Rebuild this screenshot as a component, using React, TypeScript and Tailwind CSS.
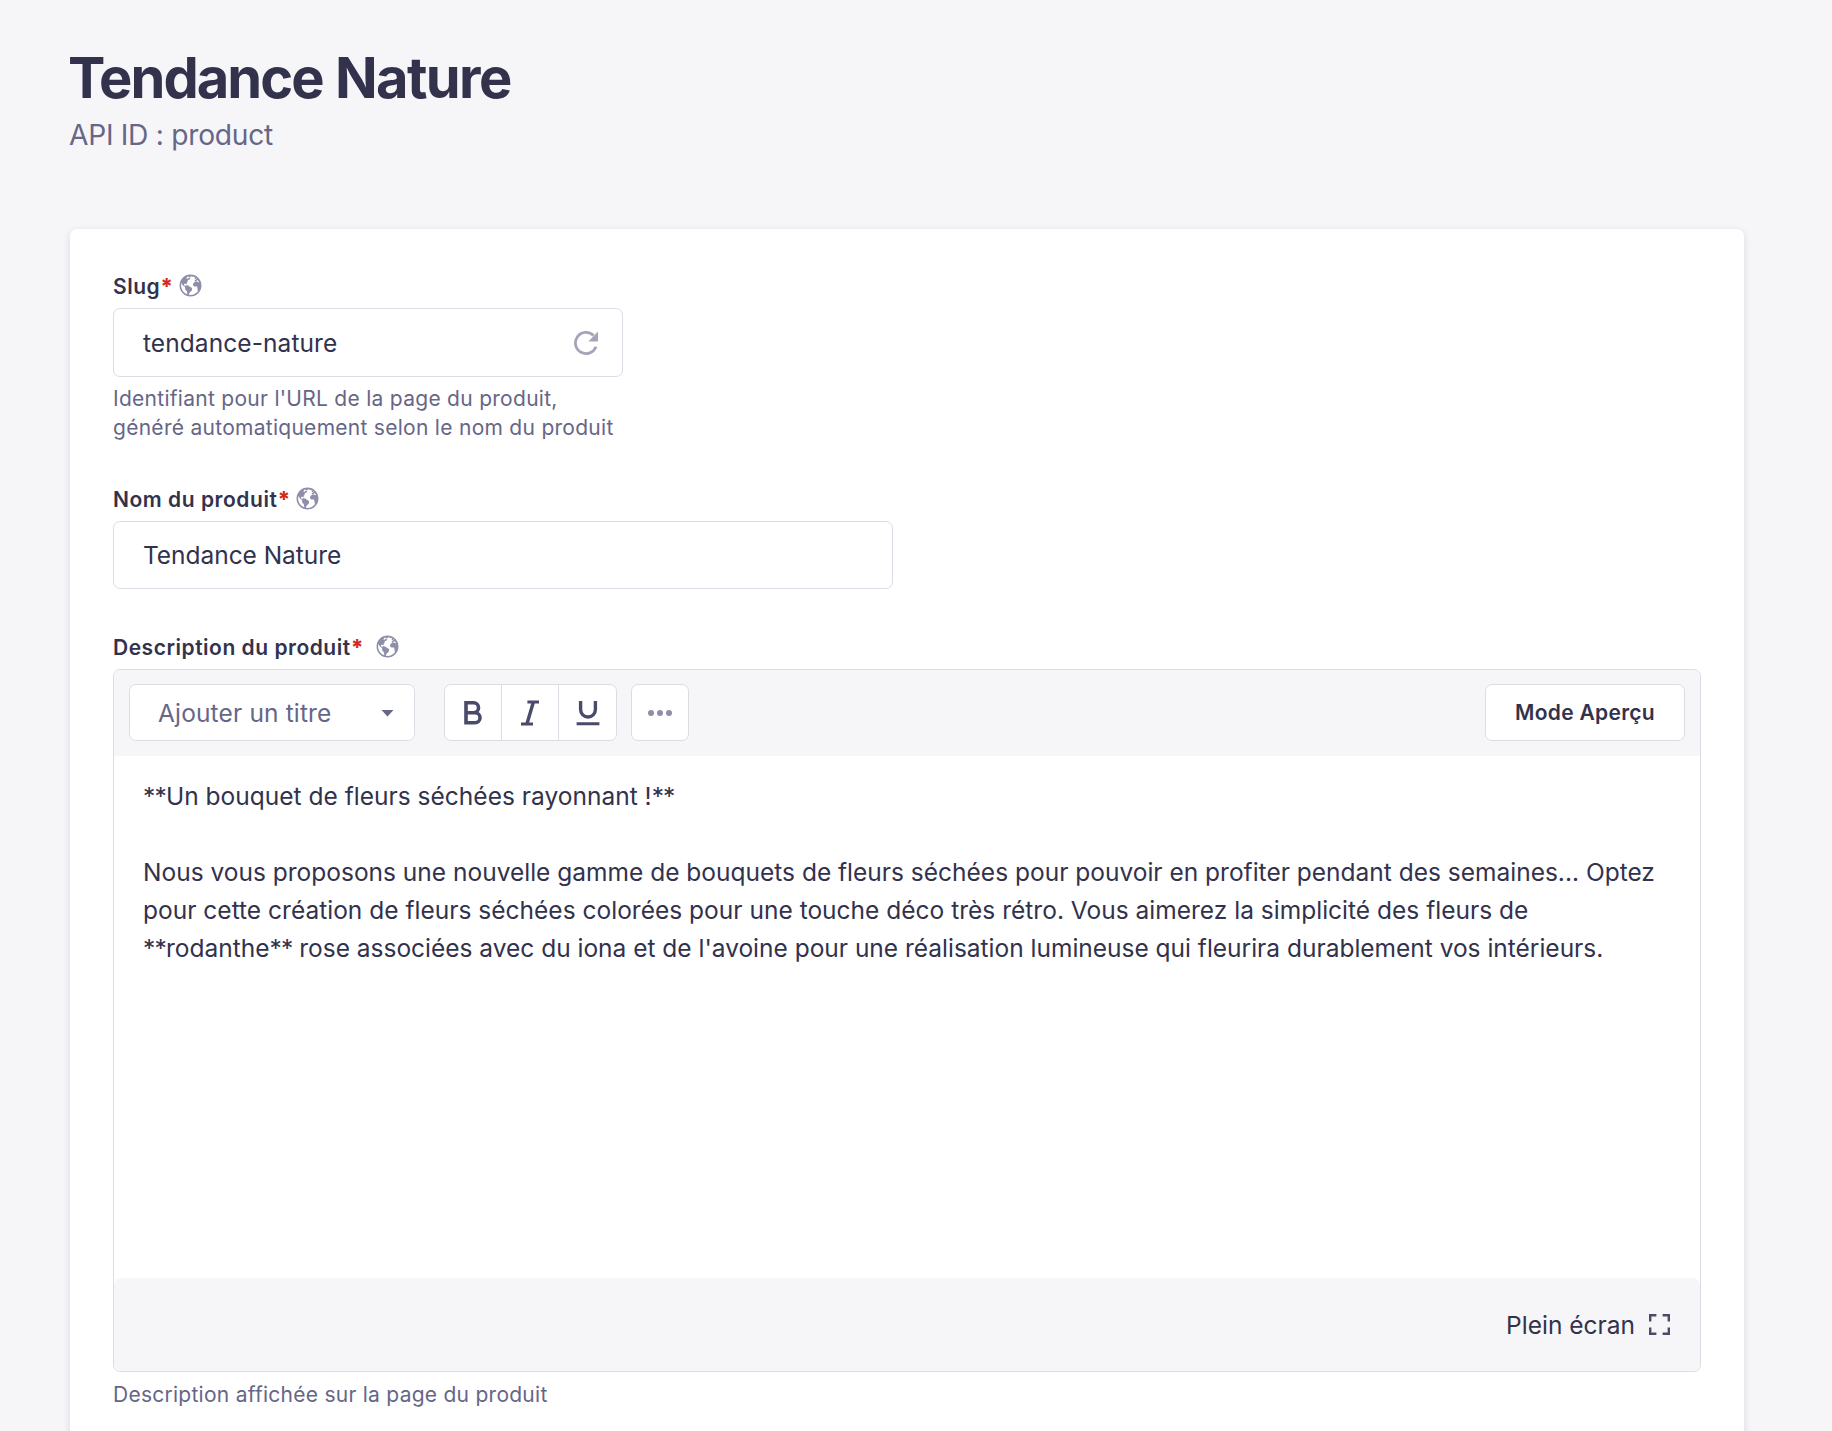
import React from "react";
import { IoEarth } from "react-icons/io5";

function Label({ text, tracking, gap }: { text: string; tracking: string; gap: string }) {
  return (
    <div className={`flex h-7 items-center ${gap}`}>
      <span className={`relative top-px text-[21px] leading-7 font-[640] whitespace-nowrap ${tracking}`}>
        {text}
        <span className="text-[22px] leading-none font-extrabold tracking-normal text-[#d02b20]">*</span>
      </span>
      <IoEarth className="-mx-[1.5px] -mt-px size-[25px] shrink-0 text-[#8e8ea9]" />
    </div>
  );
}

function Refresh() {
  return (
    <svg viewBox="0 0 26 26" className="size-[26px]" fill="none">
      <path d="M23 16.6A10.6 10.6 0 1 1 20.6 5.6" stroke="#a5a5ba" strokeWidth="2.8" />
      <path d="M25 1.6v10h-9.6z" fill="#a5a5ba" />
    </svg>
  );
}

function Stars() {
  return <span className="tracking-[-0.8px]">**</span>;
}

const toolButton = "flex w-[57px] items-center justify-center";

export default function App() {
  return (
    <div className="flex h-[1431px] w-[1832px] flex-col overflow-hidden bg-[#f6f6f9] px-[70px] pt-[43px] font-['Inter',sans-serif] text-[#32324d]">
      <h1 className="-ml-[2px] text-[56px] leading-[70px] font-bold tracking-[-1.95px] [word-spacing:1px] whitespace-nowrap">
        Tendance <span className="tracking-[-1.6px]">Nature</span>
      </h1>
      <p className="-ml-px pt-px text-[28.2px] leading-[42px] tracking-[-0.28px] text-[#666687]">API ID : product</p>

      <main className="mt-[73px] flex h-[1300px] w-[1674px] shrink-0 flex-col rounded-[7px] bg-white px-[43px] pt-[43px] shadow-[0_2px_7px_rgba(33,33,52,0.13)]">
        <Label text="Slug" tracking="tracking-[0.5px]" gap="gap-[6.5px]" />
        <div className="mt-2 flex h-[69px] w-[510px] items-center justify-between rounded-[7px] border border-[#dcdce4] pr-[23px] pl-[29px]">
          <span className="pt-[2px] text-[24.5px] tracking-[0.08px]">tendance-nature</span>
          <Refresh />
        </div>
        <p className="mt-[7px] text-[21px] leading-[29px] tracking-[0.28px] text-[#666687]">
          Identifiant pour l'URL de la page du produit,
          <br />
          généré automatiquement selon le nom du produit
        </p>

        <div className="mt-[43px]">
          <Label text="Nom du produit" tracking="tracking-[0.54px]" gap="gap-[6.5px]" />
        </div>
        <div className="mt-2 flex h-[68px] w-[780px] items-center rounded-[7px] border border-[#dcdce4] pl-[29px]">
          <span className="text-[24.5px] tracking-[-0.04px]">Tendance Nature</span>
        </div>

        <div className="mt-[44px]">
          <Label text="Description du produit" tracking="tracking-[0.52px]" gap="gap-[13px]" />
        </div>
        <section className="mt-2 flex h-[703px] w-[1588px] shrink-0 flex-col overflow-hidden rounded-[7px] border border-[#dcdce4]">
          <div className="flex h-[86px] shrink-0 items-start bg-[#f6f6f9] px-[15px] pt-[14px]">
            <div className="flex h-[57px] w-[286px] items-center justify-between rounded-[7px] border border-[#dcdce4] bg-white pr-[20px] pl-[28px]">
              <span className="pt-px text-[24.5px] tracking-[0.15px] text-[#666687]">Ajouter un titre</span>
              <svg viewBox="0 0 13 7" className="mt-[2px] h-[7px] w-[13px]">
                <path d="M.5 0h12L6.5 6.6z" fill="#666687" />
              </svg>
            </div>
            <div className="ml-[29px] flex h-[57px] w-[173px] divide-x divide-[#dcdce4] rounded-[7px] border border-[#dcdce4] bg-white">
              <div className={toolButton}>
                <svg viewBox="0 0 20 26" className="h-[26px] w-[20px]" fill="none" stroke="#4a4a6a" strokeWidth="3.6">
                  <path d="M3 2.8h7.6a4.9 4.9 0 0 1 0 9.9H3zM3 12.7h9a5 5 0 0 1 0 10.1H3z" strokeLinejoin="miter" />
                </svg>
              </div>
              <div className={toolButton}>
                <svg viewBox="0 0 20 26" className="h-[26px] w-[20px]" fill="none" stroke="#4a4a6a">
                  <path d="M7.4 1.9H19M1 24.1h12" strokeWidth="3" />
                  <path d="M13.4 1.9L6.9 24.1" strokeWidth="3.4" />
                </svg>
              </div>
              <div className={toolButton}>
                <svg viewBox="0 0 24 26" className="h-[26px] w-[24px]" fill="none" stroke="#4a4a6a">
                  <path d="M4.6 1v8.6a7.4 7.4 0 0 0 14.8 0V1" strokeWidth="3.4" />
                  <path d="M.6 23.8h22.8" strokeWidth="3" />
                </svg>
              </div>
            </div>
            <div className="ml-[14px] flex h-[57px] w-[58px] items-center justify-center gap-[3.2px] rounded-[7px] border border-[#dcdce4] bg-white">
              <span className="size-[6px] rounded-full bg-[#8e8ea9]" />
              <span className="size-[6px] rounded-full bg-[#8e8ea9]" />
              <span className="size-[6px] rounded-full bg-[#8e8ea9]" />
            </div>
            <div className="ml-auto flex h-[57px] w-[200px] items-center justify-center rounded-[7px] border border-[#dcdce4] bg-white text-[21px] font-[640] tracking-[0.3px]">
              Mode Aperçu
            </div>
          </div>
          <div className="grow bg-white pt-[21px] pl-[29px] text-[24.5px] leading-[38px] whitespace-nowrap">
            <p className="tracking-[0.01px]">
              <Stars />
              Un bouquet de fleurs séchées rayonnant !<Stars />
            </p>
            <p className="mt-[38px]">
              Nous vous proposons une nouvelle gamme de bouquets de fleurs séchées pour pouvoir en profiter pendant des semaines... Optez
              <br />
              <span className="tracking-[0.01px]">
                pour cette création de fleurs séchées colorées pour une touche déco très rétro. Vous aimerez la simplicité des fleurs de
              </span>
              <br />
              <span className="tracking-[-0.01px]">
                <Stars />
                rodanthe
                <Stars /> rose associées avec du iona et de l'avoine pour une réalisation lumineuse qui fleurira durablement vos intérieurs.
              </span>
            </p>
          </div>
          <div className="flex h-[93px] shrink-0 items-center justify-end rounded-[7px] bg-[#f6f6f9] pr-[30px]">
            <span className="pt-[2px] text-[24.5px]">Plein écran</span>
            <svg viewBox="0 0 21 21" className="ml-[14px] size-[21px]" fill="none" stroke="#4a4a6a" strokeWidth="2.4">
              <path d="M1.2 7.4V1.2h6.2M13.6 1.2h6.2v6.2M19.8 13.6v6.2h-6.2M7.4 19.8H1.2v-6.2" />
            </svg>
          </div>
        </section>
        <p className="mt-2 text-[21px] leading-[29px] tracking-[0.26px] text-[#666687]">Description affichée sur la page du produit</p>
      </main>
    </div>
  );
}
